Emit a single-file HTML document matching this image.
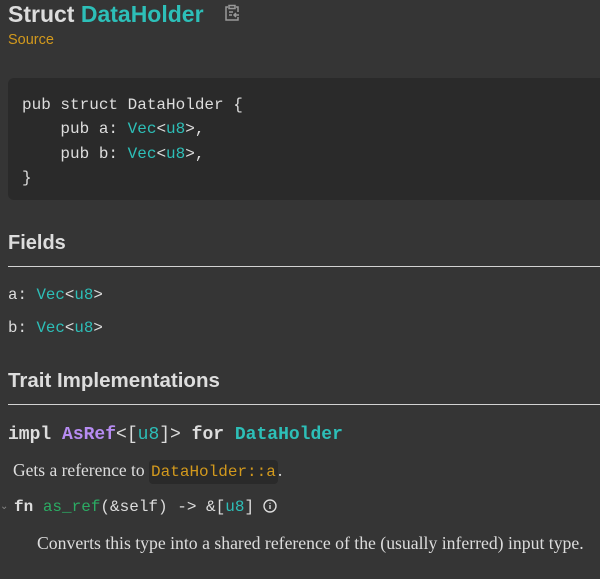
<!DOCTYPE html>
<html><head><meta charset="utf-8"><style>
body{margin:0;width:600px;height:579px;background:#353535;color:#ddd;overflow:hidden;position:relative;font-family:"Liberation Sans",sans-serif}
.a{position:absolute;white-space:pre;line-height:1}
.m{font-family:"Liberation Mono",monospace}
.s{font-family:"Liberation Serif",serif}
.t{color:#2dbfb8}.p{color:#b78cf2}.g{color:#2bab63}.o{color:#d2991d}
.code{position:absolute;left:8px;top:78px;width:600px;height:122px;background:#2a2a2a;border-radius:6px}
.hr{position:absolute;left:8px;right:0;height:1px;background:#d2d2d2}
</style></head><body>
<div class="a" style="left:8px;top:3px;font-size:23px;font-weight:bold;color:#ddd">Struct <span class="t">DataHolder</span></div>
<svg style="position:absolute;left:223px;top:4px" width="18" height="18" viewBox="0 0 18 18" fill="none" stroke="#999" stroke-width="1.5"><path d="M5 3H3v13h12v-3M13 3h2v5M6 1.5h6v3H6z M6 8h4M6 11h3M16 11h-5m2-2l-2 2 2 2"/></svg>
<div class="a o" style="left:8px;top:33px;font-size:14.5px">Source</div>
<div class="code"></div>
<div class="a m" style="left:22px;top:93px;font-size:16px;line-height:24.4px;color:#ddd">pub struct DataHolder {
    pub a: <span class="t">Vec</span>&lt;<span class="t">u8</span>&gt;,
    pub b: <span class="t">Vec</span>&lt;<span class="t">u8</span>&gt;,
}</div>
<div class="a" style="left:8px;top:233px;font-size:20px;font-weight:bold">Fields</div>
<div class="hr" style="top:266px"></div>
<div class="a m" style="left:8px;top:288px;font-size:15.8px">a: <span class="t">Vec</span>&lt;<span class="t">u8</span>&gt;</div>
<div class="a m" style="left:8px;top:321px;font-size:15.8px">b: <span class="t">Vec</span>&lt;<span class="t">u8</span>&gt;</div>
<div class="a" style="left:8px;top:371px;font-size:20.5px;font-weight:bold">Trait Implementations</div>
<div class="hr" style="top:404px"></div>
<div class="a m" style="left:8px;top:426px;font-size:18px;font-weight:bold">impl <span class="p">AsRef</span><span style="font-weight:normal">&lt;[</span><span class="t" style="font-weight:normal">u8</span><span style="font-weight:normal">]&gt;</span> for <span class="t">DataHolder</span></div>
<div class="a s" style="left:13px;top:462px;font-size:17.5px">Gets a reference to <span class="m o" style="background:#2a2a2a;border-radius:4px;padding:3px 2px;font-size:16px">DataHolder::a</span>.</div>
<div class="a" style="left:0px;top:502px;font-size:10px;color:#888">⌄</div>
<div class="a m" style="left:14px;top:499px;font-size:16px"><b>fn</b> <span class="g">as_ref</span>(&amp;self) -&gt; &amp;[<span class="t">u8</span>]</div>
<svg style="position:absolute;left:263px;top:499px" width="14" height="14" viewBox="0 0 14 14" fill="none" stroke="#ddd" stroke-width="1.4"><circle cx="7" cy="7" r="6"/><path d="M7 6v4M7 3.8v1"/></svg>
<div class="a s" style="left:37px;top:535px;font-size:17.7px">Converts this type into a shared reference of the (usually inferred) input type.</div>
</body></html>
